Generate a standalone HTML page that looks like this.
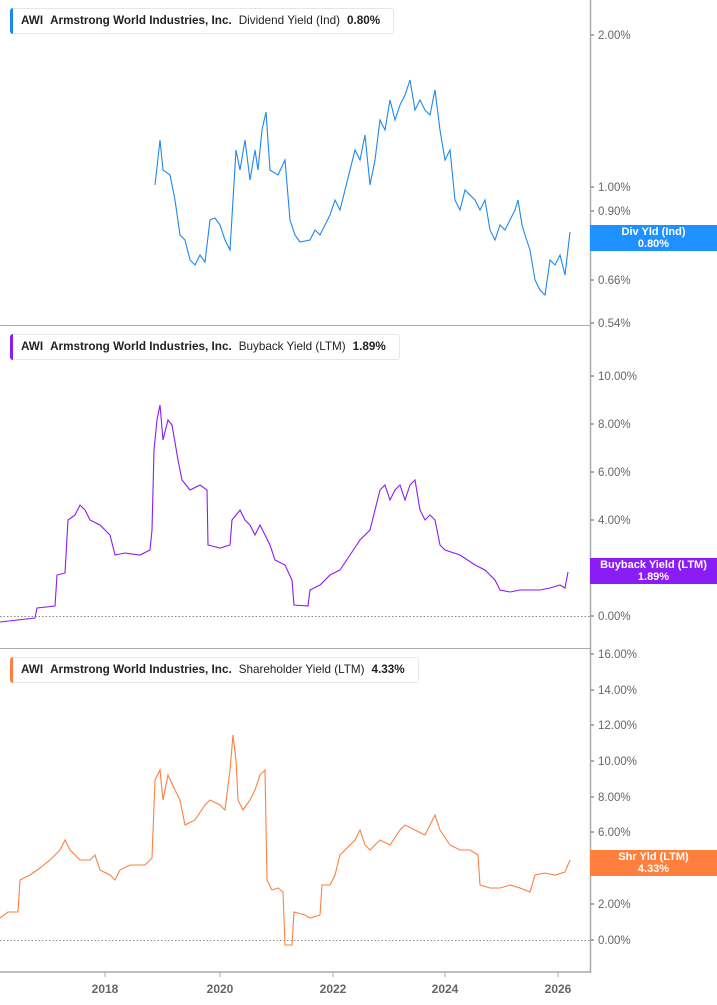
<!DOCTYPE html>
<html><head><meta charset="utf-8"><style>
body{margin:0;width:717px;height:1005px;background:#fff;overflow:hidden;font-family:"Liberation Sans",sans-serif}
svg{position:absolute;left:0;top:0}
.lg{position:absolute;left:10px;height:24px;border:1px solid #e6e6e6;border-radius:3px;background:#fff;font-size:11.7px;line-height:24px;color:#222;white-space:nowrap;padding-left:10px;padding-right:6px}
.lg:before{content:"";position:absolute;left:-1px;top:-1px;bottom:-1px;width:3px;border-radius:3px 0 0 3px;background:var(--c)}
.lg b{margin-right:7px}.lg span{margin-right:7px}
.tag{position:absolute;left:590px;width:127px;height:26px;color:#fff;font-size:11px;font-weight:bold;text-align:center;line-height:12px;padding-top:1px;box-sizing:border-box}
</style></head><body>
<svg width="717" height="1005" font-family="Liberation Sans, sans-serif" font-size="12" fill="#555">
<line x1="590.5" y1="0" x2="590.5" y2="973" stroke="#aaa" stroke-width="1.5"/>
<line x1="0" y1="325.5" x2="590" y2="325.5" stroke="#aaa"/>
<line x1="0" y1="648.5" x2="590" y2="648.5" stroke="#aaa"/>
<line x1="0" y1="972" x2="591" y2="972" stroke="#aaa" stroke-width="1.5"/>
<line x1="0" y1="616.5" x2="590" y2="616.5" stroke="#888" stroke-dasharray="1.5,2"/>
<line x1="0" y1="940.5" x2="590" y2="940.5" stroke="#888" stroke-dasharray="1.5,2"/>
<g stroke="#aaa"><line x1="105" y1="972" x2="105" y2="977"/><line x1="220" y1="972" x2="220" y2="977"/><line x1="333" y1="972" x2="333" y2="977"/><line x1="445" y1="972" x2="445" y2="977"/><line x1="558" y1="972" x2="558" y2="977"/></g>
<g stroke="#777" stroke-width="1.2">
<line x1="591" y1="35" x2="594" y2="35"/><line x1="591" y1="187" x2="594" y2="187"/><line x1="591" y1="211" x2="594" y2="211"/><line x1="591" y1="280" x2="594" y2="280"/><line x1="591" y1="323" x2="594" y2="323"/>
<line x1="591" y1="376" x2="594" y2="376"/><line x1="591" y1="424" x2="594" y2="424"/><line x1="591" y1="472" x2="594" y2="472"/><line x1="591" y1="520" x2="594" y2="520"/><line x1="591" y1="616" x2="594" y2="616"/>
<line x1="591" y1="654" x2="594" y2="654"/><line x1="591" y1="690" x2="594" y2="690"/><line x1="591" y1="725" x2="594" y2="725"/><line x1="591" y1="761" x2="594" y2="761"/><line x1="591" y1="797" x2="594" y2="797"/><line x1="591" y1="832" x2="594" y2="832"/><line x1="591" y1="904" x2="594" y2="904"/><line x1="591" y1="940" x2="594" y2="940"/>
</g>
<g font-weight="bold" font-size="12" fill="#666" text-anchor="middle"><text x="105" y="993">2018</text><text x="220" y="993">2020</text><text x="333" y="993">2022</text><text x="445" y="993">2024</text><text x="558" y="993">2026</text></g>
<g font-size="11.5" fill="#666">
<text x="598" y="39">2.00%</text><text x="598" y="191">1.00%</text><text x="598" y="215">0.90%</text><text x="598" y="245">0.78%</text><text x="598" y="284">0.66%</text><text x="598" y="327">0.54%</text>
<text x="598" y="380">10.00%</text><text x="598" y="428">8.00%</text><text x="598" y="476">6.00%</text><text x="598" y="524">4.00%</text><text x="598" y="572">2.00%</text><text x="598" y="620">0.00%</text>
<text x="598" y="658">16.00%</text><text x="598" y="694">14.00%</text><text x="598" y="729">12.00%</text><text x="598" y="765">10.00%</text><text x="598" y="801">8.00%</text><text x="598" y="836">6.00%</text><text x="598" y="872">4.00%</text><text x="598" y="908">2.00%</text><text x="598" y="944">0.00%</text>
</g>
<polyline fill="none" stroke="#1e88f0" stroke-width="1.1" points="155,185 160,140 163,170 170,175 175,200 180,235 185,240 190,260 195,265 200,255 205,262 210,220 215,218 220,225 225,240 230,250 233,200 236,150 240,170 245,140 250,180 255,150 258,170 262,130 266,112 270,170 278,175 285,160 290,220 295,235 300,242 310,240 315,230 320,235 330,215 335,200 340,210 345,190 350,170 355,150 360,160 365,135 370,185 375,160 380,120 385,130 390,100 395,120 400,105 405,95 410,80 415,110 420,100 425,110 430,115 435,90 440,130 445,160 450,150 455,200 460,210 465,190 470,195 475,200 480,210 485,200 490,230 495,240 500,225 505,230 510,220 515,210 518,200 522,225 525,235 530,250 535,280 540,290 545,295 550,260 555,265 560,255 565,275 570,232"/>
<polyline fill="none" stroke="#8a1cf5" stroke-width="1.1" points="0,622 35,618 37,608 55,606 57,575 65,573 68,520 75,515 80,505 85,510 90,520 100,525 105,530 110,535 115,555 125,553 140,555 150,550 152,530 154,450 157,420 160,405 163,440 168,420 172,425 178,460 182,480 190,490 200,485 207,490 208,545 220,548 230,545 232,520 240,510 245,520 250,525 255,535 260,525 265,535 270,545 275,560 285,565 292,580 294,605 308,606 310,590 320,585 330,575 340,570 350,555 360,540 370,530 375,510 380,490 385,485 390,500 395,490 400,485 405,500 410,485 415,480 420,510 425,520 430,515 435,520 440,545 445,550 460,555 475,565 485,570 495,580 500,590 510,592 520,590 540,590 550,588 560,585 565,588 568,572"/>
<polyline fill="none" stroke="#ff7f3f" stroke-width="1.1" points="0,918 8,912 18,912 20,880 30,875 40,868 50,860 60,850 65,840 70,850 80,860 90,860 95,855 100,870 110,875 115,880 120,870 130,865 145,865 152,858 155,780 160,770 163,800 168,775 175,790 180,800 185,825 195,820 205,805 210,800 220,805 225,810 230,770 233,735 236,760 238,800 243,810 250,800 255,790 260,775 265,770 267,880 272,890 278,888 283,892 285,945 292,945 294,912 305,915 310,918 320,915 322,885 330,885 335,875 340,855 345,850 355,840 360,830 365,845 370,850 380,840 390,845 400,830 405,825 415,830 425,835 435,815 440,830 450,845 460,850 470,850 478,855 480,885 490,888 500,888 510,885 520,888 530,892 535,875 545,873 555,875 565,872 570,860"/>
</svg>
<div class="lg" style="top:8px;--c:#1e88f0"><b>AWI</b><b>Armstrong World Industries, Inc.</b><span>Dividend Yield (Ind)</span><b>0.80%</b></div>
<div class="lg" style="top:334px;--c:#8a1cf5"><b>AWI</b><b>Armstrong World Industries, Inc.</b><span>Buyback Yield (LTM)</span><b>1.89%</b></div>
<div class="lg" style="top:657px;--c:#ff7f3f"><b>AWI</b><b>Armstrong World Industries, Inc.</b><span>Shareholder Yield (LTM)</span><b>4.33%</b></div>
<div class="tag" style="top:225px;background:#1e90ff">Div Yld (Ind)<br>0.80%</div>
<div class="tag" style="top:558px;background:#8a1cf5">Buyback Yield (LTM)<br>1.89%</div>
<div class="tag" style="top:850px;background:#ff7f3f">Shr Yld (LTM)<br>4.33%</div>
</body></html>
